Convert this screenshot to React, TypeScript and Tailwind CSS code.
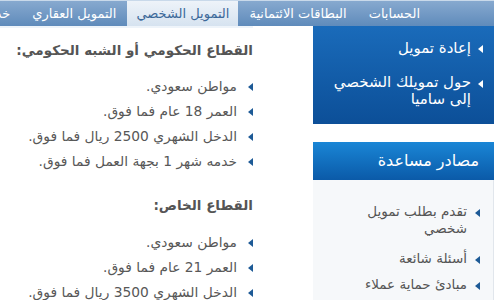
import React from "react";

const Tri = ({ color }: { color: string }) => (
  <svg width="5" height="8" viewBox="0 0 5 8" className="shrink-0">
    <path d="M5 0 L0 4 L5 8 Z" fill={color} />
  </svg>
);

const NavItem = ({ label, active }: { label: string; active?: boolean }) => (
  <div
    className={
      active
        ? "h-full px-[9px] flex items-center bg-gradient-to-b from-[#eef3f9] to-[#d6e3f0] text-[#3b6899] whitespace-nowrap"
        : "h-full px-[11px] flex items-center text-white whitespace-nowrap"
    }
  >
    {label}
  </div>
);

const MainItem = ({ text }: { text: string }) => (
  <li className="flex items-center gap-[11px] h-[25px]">
    <Tri color="#1d5a96" />
    <span>{text}</span>
  </li>
);

export default function App() {
  return (
    <div
      dir="rtl"
      className="w-[494px] h-[300px] overflow-hidden bg-white"
      style={{ fontFamily: '"DejaVu Sans", Tahoma, sans-serif' }}
    >
      <div className="h-[26px] flex items-stretch pr-[63px] text-[13px] bg-gradient-to-b from-[#87a9cf] to-[#5f8bbb] border-t border-[#c9d9ea] overflow-hidden">
        <NavItem label="الحسابات" />
        <NavItem label="البطاقات الائتمانية" />
        <NavItem label="التمويل الشخصي" active />
        <NavItem label="التمويل العقاري" />
        <NavItem label="خدمات" />
      </div>
      <div className="flex">
        <div className="w-[181px] shrink-0">
          <div className="h-[98px] bg-gradient-to-b from-[#1a6bba] to-[#0c4f98] pt-[13px] pr-[11px] text-white text-[15px]">
            <div className="flex items-start gap-[7px]">
              <div className="pt-[6px]"><Tri color="#ffffff" /></div>
              <span className="leading-[19px]">إعادة تمويل</span>
            </div>
            <div className="flex items-start gap-[7px] mt-[16px]">
              <div className="pt-[6px]"><Tri color="#ffffff" /></div>
              <span className="leading-[17px]">حول تمويلك الشخصي<br />إلى ساميا</span>
            </div>
          </div>
          <div className="mt-[18px] h-[38px] bg-gradient-to-b from-[#1a86d6] to-[#0b5aa8] text-white text-[16px] flex items-center pr-[15px]">
            مصادر مساعدة
          </div>
          <div className="h-[120px] bg-[#f6f8fa] border-r border-[#e1e6ec] pt-[23px] pr-[13px] text-[13.5px] text-[#555]">
            <div className="flex items-start gap-[8px]">
              <div className="pt-[6px]"><Tri color="#1d5a96" /></div>
              <span className="leading-[17px]">تقدم بطلب تمويل<br />شخصي</span>
            </div>
            <div className="flex items-start gap-[8px] mt-[13px]">
              <div className="pt-[6px]"><Tri color="#1d5a96" /></div>
              <span className="leading-[17px]">أسئلة شائعة</span>
            </div>
            <div className="flex items-start gap-[8px] mt-[9px]">
              <div className="pt-[6px]"><Tri color="#1d5a96" /></div>
              <span className="leading-[17px]">مبادئ حماية عملاء</span>
            </div>
          </div>
        </div>
        <div className="flex-1 pr-[60px] text-[#555]">
          <div className="border-t-2 border-[#eef4fa] pt-[12px]">
            <h2 className="text-[13.5px] font-bold text-[#555] leading-[20px]">
              القطاع الحكومي أو الشبه الحكومي:
            </h2>
            <ul className="mt-[14px] text-[13.8px] text-[#585858]">
              <MainItem text="مواطن سعودي." />
              <MainItem text="العمر 18 عام فما فوق." />
              <MainItem text="الدخل الشهري 2500 ريال فما فوق." />
              <MainItem text="خدمه شهر 1 بجهة العمل فما فوق." />
            </ul>
            <h2 className="mt-[21px] text-[13.5px] font-bold text-[#555] leading-[20px]">
              القطاع الخاص:
            </h2>
            <ul className="mt-[15px] text-[13.8px] text-[#585858]">
              <MainItem text="مواطن سعودي." />
              <MainItem text="العمر 21 عام فما فوق." />
              <MainItem text="الدخل الشهري 3500 ريال فما فوق." />
            </ul>
          </div>
        </div>
      </div>
    </div>
  );
}
